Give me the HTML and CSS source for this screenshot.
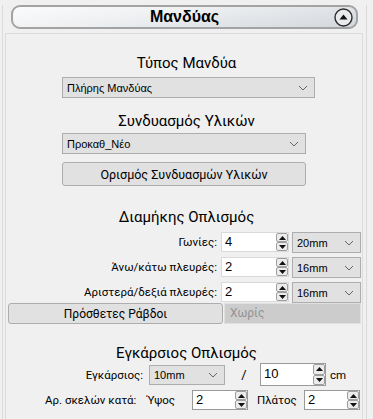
FILE: index.html
```html
<!DOCTYPE html>
<html>
<head>
  <title>Μανδύας</title>
  <link rel="stylesheet" href="styles.css">
</head>

<body>
  <div class="frame">
    <div class="header">
      <span></span>
      <span class="header-title">Μανδύας</span>
      <span class="collapse">
        <svg width="19" height="19" viewBox="0 0 19 19">
          <circle cx="9.5" cy="9.5" r="8.5" fill="#e9eaec" stroke="#2b2b2b" stroke-width="1.4"/>
          <path d="M5.5 11.5 L9.5 6.5 L13.5 11.5 Z" fill="#111"/>
        </svg>
      </span>
    </div>

    <div class="panel">
      <h2 class="section-title t1">Τύπος Μανδύα</h2>
      <div class="combo combo-type">
        <span>Πλήρης Μανδύας</span>
        <svg class="chev" width="10" height="6" viewBox="0 0 10 6"><path d="M1 1 L5 5 L9 1" fill="none" stroke="#666" stroke-width="1"/></svg>
      </div>

      <h2 class="section-title t2">Συνδυασμός Υλικών</h2>
      <div class="combo combo-mat">
        <span>Προκαθ_Νέο</span>
        <svg class="chev" width="10" height="6" viewBox="0 0 10 6"><path d="M1 1 L5 5 L9 1" fill="none" stroke="#666" stroke-width="1"/></svg>
      </div>
      <button class="btn btn-mat">Ορισμός Συνδυασμών Υλικών</button>

      <h2 class="section-title t3">Διαμήκης Οπλισμός</h2>
      <div class="bar-grid">
        <label>Γωνίες:</label>
        <div class="spin">
          <span class="spin-value">4</span>
          <span class="spin-btns">
            <span class="arrow"><svg width="7" height="4" viewBox="0 0 7 4"><path d="M0 4 L3.5 0 L7 4 Z" fill="#111"/></svg></span>
            <span class="arrow"><svg width="7" height="4" viewBox="0 0 7 4"><path d="M0 0 L3.5 4 L7 0 Z" fill="#111"/></svg></span>
          </span>
        </div>
        <div class="combo">
          <span>20mm</span>
          <svg class="chev" width="10" height="6" viewBox="0 0 10 6"><path d="M1 1 L5 5 L9 1" fill="none" stroke="#666" stroke-width="1"/></svg>
        </div>

        <label>Άνω/κάτω πλευρές:</label>
        <div class="spin">
          <span class="spin-value">2</span>
          <span class="spin-btns">
            <span class="arrow"><svg width="7" height="4" viewBox="0 0 7 4"><path d="M0 4 L3.5 0 L7 4 Z" fill="#111"/></svg></span>
            <span class="arrow"><svg width="7" height="4" viewBox="0 0 7 4"><path d="M0 0 L3.5 4 L7 0 Z" fill="#111"/></svg></span>
          </span>
        </div>
        <div class="combo">
          <span>16mm</span>
          <svg class="chev" width="10" height="6" viewBox="0 0 10 6"><path d="M1 1 L5 5 L9 1" fill="none" stroke="#666" stroke-width="1"/></svg>
        </div>

        <label>Αριστερά/δεξιά πλευρές:</label>
        <div class="spin">
          <span class="spin-value">2</span>
          <span class="spin-btns">
            <span class="arrow"><svg width="7" height="4" viewBox="0 0 7 4"><path d="M0 4 L3.5 0 L7 4 Z" fill="#111"/></svg></span>
            <span class="arrow"><svg width="7" height="4" viewBox="0 0 7 4"><path d="M0 0 L3.5 4 L7 0 Z" fill="#111"/></svg></span>
          </span>
        </div>
        <div class="combo">
          <span>16mm</span>
          <svg class="chev" width="10" height="6" viewBox="0 0 10 6"><path d="M1 1 L5 5 L9 1" fill="none" stroke="#666" stroke-width="1"/></svg>
        </div>
      </div>

      <div class="extra-row">
        <button class="btn btn-extra">Πρόσθετες Ράβδοι</button>
        <div class="disabled-field">Χωρίς</div>
      </div>

      <h2 class="section-title t4">Εγκάρσιος Οπλισμός</h2>
      <div class="stirrup-row">
        <label class="stirrup-label">Εγκάρσιος:</label>
        <div class="combo combo-stirrup">
          <span>10mm</span>
          <svg class="chev" width="10" height="6" viewBox="0 0 10 6"><path d="M1 1 L5 5 L9 1" fill="none" stroke="#666" stroke-width="1"/></svg>
        </div>
        <span class="slash">/</span>
        <div class="spin framed spin-spacing">
          <span class="spin-value">10</span>
          <span class="spin-btns">
            <span class="arrow"><svg width="7" height="4" viewBox="0 0 7 4"><path d="M0 4 L3.5 0 L7 4 Z" fill="#111"/></svg></span>
            <span class="arrow"><svg width="7" height="4" viewBox="0 0 7 4"><path d="M0 0 L3.5 4 L7 0 Z" fill="#111"/></svg></span>
          </span>
        </div>
        <span class="unit">cm</span>
      </div>

      <div class="legs-row">
        <label class="legs-label">Αρ. σκελών κατά:</label>
        <span class="legs-dir">Ύψος</span>
        <div class="spin framed spin-legs">
          <span class="spin-value">2</span>
          <span class="spin-btns">
            <span class="arrow"><svg width="7" height="4" viewBox="0 0 7 4"><path d="M0 4 L3.5 0 L7 4 Z" fill="#111"/></svg></span>
            <span class="arrow"><svg width="7" height="4" viewBox="0 0 7 4"><path d="M0 0 L3.5 4 L7 0 Z" fill="#111"/></svg></span>
          </span>
        </div>
        <span class="legs-dir width-dir">Πλάτος</span>
        <div class="spin framed spin-legs">
          <span class="spin-value">2</span>
          <span class="spin-btns">
            <span class="arrow"><svg width="7" height="4" viewBox="0 0 7 4"><path d="M0 4 L3.5 0 L7 4 Z" fill="#111"/></svg></span>
            <span class="arrow"><svg width="7" height="4" viewBox="0 0 7 4"><path d="M0 0 L3.5 4 L7 0 Z" fill="#111"/></svg></span>
          </span>
        </div>
      </div>
    </div>
  </div>
</body>
</html>
```

FILE: styles.css
```css
* {
  margin: 0;
  padding: 0;
  box-sizing: border-box;
}

html, body {
  height: 100%;
  overflow: hidden;
}

body {
  background: #f0f0f0;
  font-family: Roboto, 'Noto Sans', sans-serif;
  color: #000;
}

.frame {
  margin-left: 2px;
  width: 365px;
  height: 100%;
  border-left: 1px solid #dadada;
  border-right: 1px solid #dadada;
}

.header {
  display: grid;
  grid-template-columns: 1fr auto 1fr;
  align-items: center;
  margin: 5px 0 0 8px;
  width: 347px;
  height: 24px;
  border: 2px solid #a3a3a3;
  border-radius: 9px;
  background: linear-gradient(172deg, #fbfbfc 0%, #eef0f2 40%, #d3d7dc 100%);
}

.header-title {
  font-family: 'Liberation Sans', sans-serif;
  font-weight: bold;
  font-size: 16px;
  line-height: 20px;
}

.collapse {
  justify-self: end;
  margin-right: 3px;
  display: flex;
}

.panel {
  margin: 4px 0 0 2px;
  width: 358px;
  height: 420px;
  border: 1px solid #dcdcdc;
  display: flex;
  flex-direction: column;
  align-items: flex-start;
}

.section-title {
  align-self: stretch;
  font-weight: normal;
  font-size: 15px;
  line-height: 20px;
  height: 20px;
  text-align: center;
  padding-left: 5px;
}

.t1 { margin-top: 19px; }
.t2 { margin-top: 13px; }
.t3 { margin-top: 21px; }
.t4 { margin-top: 19px; }

.combo {
  display: flex;
  align-items: center;
  justify-content: space-between;
  height: 21px;
  padding: 0 6px 0 4px;
  background: #e1e1e1;
  border: 1px solid #adadad;
  font-family: 'Liberation Sans', sans-serif;
  font-size: 11px;
}

.combo-type {
  width: 253px;
  margin: 4px 0 0 56px;
}

.combo-mat {
  width: 244px;
  margin: 2px 0 0 56px;
}

.btn {
  font-family: Roboto, 'Noto Sans', sans-serif;
  font-size: 12.5px;
  background: #e1e1e1;
  border: 1px solid #adadad;
  border-radius: 3px;
  color: #000;
}

.btn-mat {
  width: 244px;
  height: 24px;
  margin: 8px 0 0 56px;
}

.bar-grid {
  display: grid;
  grid-template-columns: 1fr 68px 69px;
  grid-auto-rows: 20px;
  column-gap: 3px;
  row-gap: 5px;
  align-self: stretch;
  margin: 5px 1px 0 0;
}

.bar-grid label {
  text-align: right;
  font-size: 11.5px;
  line-height: 20px;
  padding-right: 1px;
}

.spin {
  display: flex;
  background: #fff;
  border: 1px solid #d9d9d9;
}

.spin-value {
  flex: 1;
  font-family: 'Liberation Sans', sans-serif;
  font-size: 13px;
  line-height: 17px;
  padding-left: 3px;
}

.spin-btns {
  display: flex;
  flex-direction: column;
  width: 12px;
  margin-left: 2px;
}

.arrow {
  flex: 1;
  display: flex;
  align-items: center;
  justify-content: center;
  background: #ececec;
  border: 1px solid #9f9f9f;
  border-radius: 2px;
}

.extra-row {
  display: flex;
  margin: 1px 0 0 2px;
  height: 21px;
}

.btn-extra {
  width: 215px;
  height: 21px;
  font-size: 12px;
}

.disabled-field {
  width: 137px;
  margin-left: 1px;
  background: #cccccc;
  border: 1px solid #e0e0e0;
  color: #939393;
  font-size: 12px;
  line-height: 19px;
  padding-left: 5px;
}

.stirrup-row {
  display: flex;
  align-items: center;
  height: 23px;
  font-size: 11.5px;
}

.stirrup-label {
  width: 137px;
  text-align: right;
}

.combo-stirrup {
  width: 76px;
  height: 20px;
  margin-left: 6px;
}

.slash {
  width: 35px;
  text-align: center;
  padding-left: 3px;
  font-size: 13px;
}

.framed {
  border: 1px solid #9a9a9a;
}

.spin-spacing {
  width: 66px;
  height: 23px;
}

.spin-spacing .spin-value {
  line-height: 20px;
}

.unit {
  margin-left: 4px;
}

.legs-row {
  display: flex;
  align-items: center;
  height: 20px;
  margin-top: 4px;
  font-size: 11.5px;
  white-space: nowrap;
}

.legs-label {
  margin-left: 39px;
  width: 86px;
}

.legs-dir {
  margin-left: 16px;
  width: 45px;
}

.width-dir {
  margin-left: 9px;
  width: 47px;
}

.spin-legs {
  width: 56px;
  height: 20px;
}
```
